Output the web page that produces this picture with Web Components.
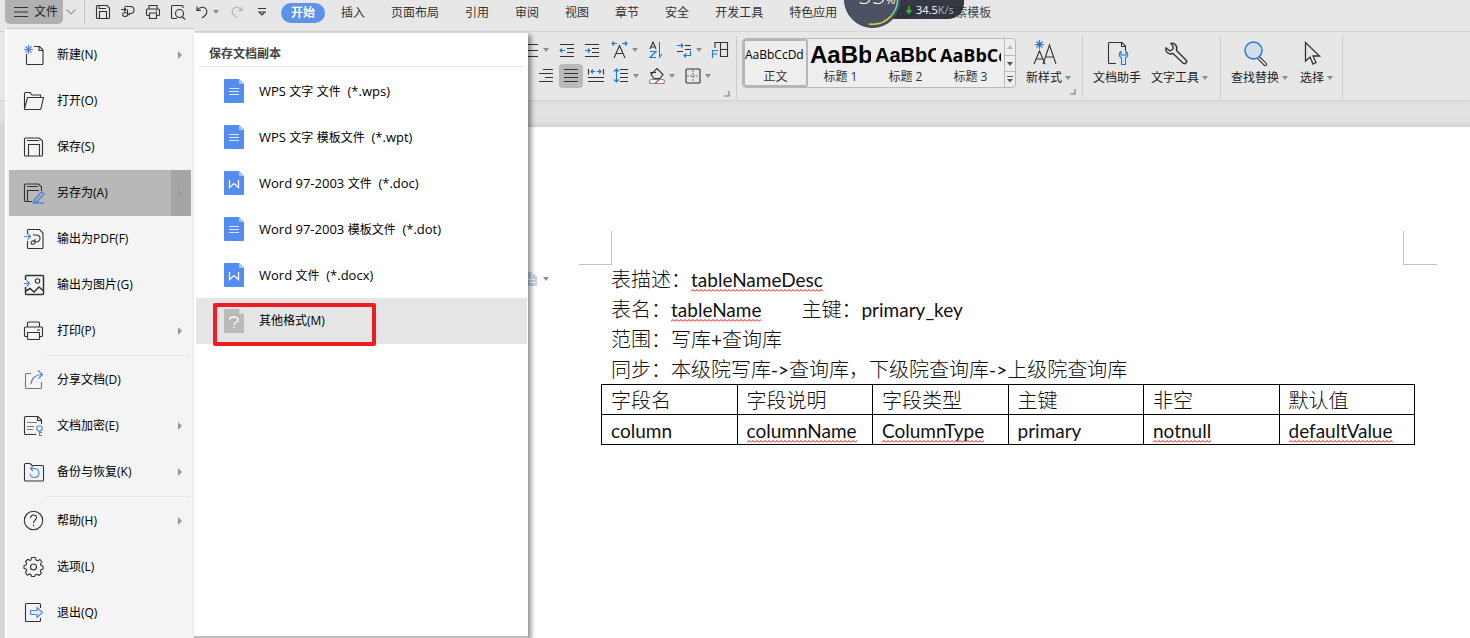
<!DOCTYPE html>
<html lang="zh-CN">
<head>
<meta charset="utf-8">
<title>WPS 文字</title>
<style>
html,body{margin:0;height:100%}
body{font-family:"Open Sans","Noto Sans CJK SC",sans-serif;font-size:12px;line-height:20px;color:#222;overflow:hidden}
</style>
</head>
<body>
<wps-app></wps-app>
<script>
const BASE = '*{box-sizing:border-box}button{font:inherit;color:inherit;background:none;border:0;padding:0;margin:0}';
const define = (tag, css, html) => {
  customElements.define(tag, class extends HTMLElement {
    connectedCallback() {
      if (this.shadowRoot) return;
      const body = typeof html === 'function' ? html(this) : html;
      this.attachShadow({ mode: 'open' }).innerHTML = `<style>${BASE}${css}</style>${body}`;
    }
  });
};

/* name: [width, height, svg body] */
const B = 'stroke="#4f86dc"', R = 'stroke="#1f78d1"';
const DOC = (c, f, g) => `<path fill="${c}" stroke="none" d="M1 0H15L20 5V23a1 1 0 0 1-1 1H1a1 1 0 0 1-1-1V1a1 1 0 0 1 1-1Z"/><path fill="${f}" stroke="none" d="M15 0 20 5H15Z"/>${g}`;
const ICONS = {
  burger: [14, 12, '<path d="M0 1.5H14M0 6H14M0 10.5H14"/>'],
  chevron: [10, 6, '<path stroke="#999" d="M.5.5 5 5 9.5.5"/>'],
  caret: [6, 4, '<path stroke="none" fill="#8c8c8c" d="M0 0H6L3 4Z"/>'],
  up: [6, 4, '<path stroke="none" fill="#bbb" d="M0 4H6L3 0Z"/>'],
  down: [6, 4, '<path stroke="none" fill="#555" d="M0 0H6L3 4Z"/>'],
  more: [8, 7, '<path stroke="#555" d="M1 .5H7"/><path stroke="none" fill="#555" d="M1 3H7L4 6.5Z"/>'],
  arrow: [4, 8, '<path stroke="none" fill="#999" d="M0 0 4 4 0 8Z"/>'],
  qsave: [16, 16, '<path d="M1.5 13.5V2.5a1 1 0 0 1 1-1H12L14.500 4V13.500a1 1 0 0 1-1 1H2.500a1 1 0 0 1-1-1ZM4 1.500V4.500H11M4.500 14V7.500H11.500V14"/>'],
  qpdf: [16, 16, '<path d="M5 2.500H10.500a3.500 3.500 0 0 1 0 7H9M7.500 5.500V11a2.500 2 0 1 1-2.500-2.500C8 8.500 8 11 10 11M1 5.500H6M4 3.500 6 5.500 4 7.500"/>'],
  print: [16, 16, '<path d="M4 5V1.500H12V5M4 11.500H2.500a1 1 0 0 1-1-1V6a1 1 0 0 1 1-1H13.500a1 1 0 0 1 1 1V10.500a1 1 0 0 1-1 1H12M4.500 9H11.500V14.500H4.500ZM10.500 7H12.500"/>'],
  preview: [16, 16, '<path d="M7 14.500H2.500a1 1 0 0 1-1-1V2.500a1 1 0 0 1 1-1H12a1 1 0 0 1 1 1V4M12 12.500 15 15.500"/><circle cx="9.500" cy="9.500" r="4"/>'],
  undo: [14, 14, '<path d="M2 1.500V5.500H6M2 5.500C5 1.500 9 1.500 11 4s1 6-4 9"/>'],
  redo: [14, 14, '<path stroke="#b0b0b0" d="M12 1.500V5.500H8M12 5.500C9 1.500 5 1.500 3 4s-1 6 4 9"/>'],
  tray: [10, 8, '<path d="M1 .500H9M2 4H8L5 7Z"/>'],
  search: [14, 14, '<circle cx="6" cy="6" r="4.500"/><path d="M9.500 9.500 13 13"/>'],
  bullets: [20, 16, '<path d="M7 2.500H17M7 8.500H17M7 14.500H17"/>'],
  outdent: [16, 14, `<path d="M1 1.500H15M8 5.500H15M8 9.500H15M1 13.500H15"/><path ${R} d="M1 7.500H6M3 5.500 1 7.500 3 9.500"/>`],
  indent: [16, 14, `<path d="M1 1.500H15M8 5.500H15M8 9.500H15M1 13.500H15"/><path ${R} d="M1 7.500H6M4 5.500 6 7.500 4 9.500"/>`],
  ascale: [18, 18, `<path d="M3 17 8.500 4.500 14 17M5 12.500H12"/><path ${R} d="M1 2.500H6M3 .500 1 2.500 3 4.500M11 2.500H16M14 .500 16 2.500 14 4.500"/>`],
  sort: [16, 18, `<path d="M2 8 5 1 8 8M3 6H7"/><path ${R} d="M2 10.500H8L2 16.500H8M11.500 1V16L14 13"/>`],
  tabs: [16, 16, `<path d="M9 3.500H15M9 7.500H15M1 9.500H7"/><path ${R} d="M1 3.500H7M5 1.500 7 3.500 5 5.500M14.500 9V13.500H8M10 11.500 8 13.500 10 15.500"/>`],
  frame: [18, 18, `<path d="M4 7V1.500H16.500V15.500H9M9.500 1.500V15M10 8.500H16"/><path ${R} d="M1.500 17V9.500H7M1.500 13H6"/>`],
  aright: [16, 16, '<path d="M5 1.500H15M1 5.500H15M7 9.500H15M1 13.500H15"/>'],
  justify: [16, 16, '<path d="M1 1.500H15M1 5.500H15M1 9.500H15M1 13.500H15"/>'],
  spread: [18, 16, `<path d="M1.500 1V6.500M16.500 1V6.500M1 9.500H17M1 13.500H17"/><path ${R} d="M4 3.500H8M6 1.500 4 3.500 6 5.500M10 3.500H14M12 1.500 14 3.500 12 5.500"/>`],
  line: [16, 16, `<path d="M7 1.500H15M7 5.500H15M7 9.500H15M7 13.500H15"/><path ${R} d="M3.500 1V14M1 3.500 3.500 1 6 3.500M1 11.500 3.500 14 6 11.500"/>`],
  fill: [18, 18, '<path d="M3 7.500 9 1.500 15 7.500 12 11.500H6ZM2 5.500H8"/><rect x="1.500" y="12.500" width="15" height="4" rx="2" fill="#fff" stroke="#888"/><path stroke="#e33" d="M7 16.500 11 12.500"/>'],
  grid: [16, 16, '<rect x="1" y="1" width="14" height="14" rx="1"/><path stroke="#777" stroke-dasharray="2 1" d="M8 2V14M2 8H14"/>'],
  corner: [6, 6, '<path stroke="#777" d="M5 0V5H0"/>'],
  newstyle: [28, 28, `<path d="M4 25 9.500 12 15 25M6 20H13M13 25 19.500 6 26 25M15 18H24"/><path ${R} d="M9.500 1V10M5 5.500H14M6.500 2.500 12.500 8.500M12.500 2.500 6.500 8.500"/>`],
  helper: [28, 28, `<path d="M13 24.500H6.500a1 1 0 0 1-1-1V4.500a1 1 0 0 1 1-1H19L22.500 7V12M18.500 3.500V7.500H22.500"/><path ${R} fill="#dbe8f7" d="M18 12.500c-3 2-2 5 .500 6.500V25.500H22.500V19c2.500-1.500 3.500-4.500.500-6.500V16H18Z"/>`],
  wrench: [28, 28, '<path stroke-width="1.400" d="M10 4.500c3-1 7 2 5.500 7L25 21c2 2-1 5-3 3L12 14.500C8 16 4 13 5 9L9 12 12 10V7Z"/>'],
  find: [28, 28, `<path fill="#fff" d="M18 17.500 25.500 24.500a1.500 1.500 0 0 1-2 2L16 19Z"/><circle cx="12.500" cy="11.500" r="8.500" fill="#d2ddec" ${R} stroke-width="1.400"/>`],
  pointer: [28, 28, '<path stroke-width="1.300" d="M7.500 3.500V22L12 18 15 25 18 23.500 15 17H21.500Z"/>'],
  mnew: [24, 24, `<path d="M4.500 11V20.500a1 1 0 0 0 1 1H20a1 1 0 0 0 1-1V7L17.500 3.500H12M17 3.500V7.500H21"/><path ${B} d="M6.500 2V11M2 6.500H11M3.500 3.500 9.500 9.500M9.500 3.500 3.500 9.500"/>`],
  mopen: [24, 24, '<path d="M2.500 19V4.500a1 1 0 0 1 1-1H8L10 6H18.500V8.500M2.500 19.500 5.500 8.500H21.500L19 19.500a1 1 0 0 1-1 1H3.500a1 1 0 0 1-1-1Z"/>'],
  msave: [24, 24, '<path d="M2.500 20V4a1 1 0 0 1 1-1H17L20.500 6V20a1 1 0 0 1-1 1H3.500a1 1 0 0 1-1-1ZM5 5.500H17M6.500 21V9.500H17.500V21"/>'],
  msaveas: [24, 24, `<path d="M10 20.500H3.500a1 1 0 0 1-1-1V4a1 1 0 0 1 1-1H16.500L19.500 6V10M5 5.500H16M5.500 20V9.500H17"/><path ${B} stroke-width="1.500" d="M12 19.500 19 11.500c1-1 3.500.500 2.500 2L15 20.500 11.500 21.500ZM12 22H22"/>`],
  mpdf: [24, 24, `<path d="M5.500 7V3.500a1 1 0 0 1 1-1H17.500L21 6V20.500a1 1 0 0 1-1 1H6.500a1 1 0 0 1-1-1V14M11 8H14.500a3.500 3.500 0 0 1 0 7H13V12M13 15c-1-2-4.500-1-4 1s4 1.500 4-1Z"/><path ${B} d="M2 9.500H8.500M5.500 6.500 8.500 9.500 5.500 12.500"/>`],
  mimg: [24, 24, `<path stroke-width="1.500" d="M3.500 7V3.500a1 1 0 0 1 1-1H20.500a1 1 0 0 1 1 1V20.500a1 1 0 0 1-1 1H4.500a1 1 0 0 1-1-1V14M4 18 8 15.500 12 19 17 14 21 17.500"/><circle cx="15.500" cy="8" r="2.200"/><path ${B} d="M2 10.500H7.500M4.500 7.500 7.500 10.500 4.500 13.500"/>`],
  mprint: [24, 24, '<path d="M5.500 8V4a1 1 0 0 1 1-1H16.500a1 1 0 0 1 1 1V8M5.500 17.500H3.500a1 1 0 0 1-1-1V9a1 1 0 0 1 1-1H19.500a1 1 0 0 1 1 1V16.500a1 1 0 0 1-1 1H17.500M6.500 13.500H17.500V19.500a1 1 0 0 1-1 1H6.500a1 1 0 0 1-1-1V13.500ZM15 11H18"/>'],
  mshare: [24, 24, `<path stroke="#777" d="M9 5.500H4.500a1 1 0 0 0-1 1V19.500a1 1 0 0 0 1 1H18.500a1 1 0 0 0 1-1V14"/><path ${B} d="M9 16C9.500 10 14 6.500 20 6.500M16 2.500 20.500 6.500 16.500 10.500"/>`],
  mlock: [24, 24, `<path d="M14 20.500H3.500a1 1 0 0 1-1-1V3.500a1 1 0 0 1 1-1H16L19.500 6V10M15.500 2.500V6.500H19.500"/><path stroke="#777" d="M5 8.500H15M5 12.500H12M5 15.500H11"/><circle cx="17.500" cy="14.500" r="2.700" ${B}/><path ${B} d="M17.500 17V22M17.500 18.500H20M17.500 21.500H20"/>`],
  mbackup: [24, 24, `<path d="M2.500 20V4.500a1 1 0 0 1 1-1H8L10 5.500H20.500a1 1 0 0 1 1 1V20a1 1 0 0 1-1 1H3.500a1 1 0 0 1-1-1Z"/><path ${B} d="M8.500 8.500H13a4.500 4.500 0 1 1-5 5M11 6 8.500 8.500 11 11"/>`],
  mhelp: [24, 24, '<circle cx="11.500" cy="11.500" r="9.200"/><path d="M8.500 9c0-4 6-4 6-.500 0 2.500-3 2.500-3 5.500M11.500 15.500V17"/>'],
  mgear: [24, 24, '<path stroke-linejoin="round" d="M9.500 2.500h4l.500 2.500 1.800.800L18 4.500 20 7l-1.500 2 .500 1.500 2 .500v3l-2.200.800-.500 1.300 1 2.200L17 20.500l-2-1.200-1.500.500L12.500 21.500h-3L9 19.700l-1.500-.700-2.200 1.200L3.500 17.500l1.200-2-.700-1.500L2 13.500v-3L4 10l.700-1.500L3.500 6.500 6 4.200l2 1.300L9 5Z"/><circle cx="11.500" cy="12" r="3"/>'],
  mexit: [24, 24, `<path d="M18.500 7V3.500a1 1 0 0 0-1-1H4.500a1 1 0 0 0-1 1V19.500a1 1 0 0 0 1 1H17.500a1 1 0 0 0 1-1V17"/><path ${B} fill="#e3ecfa" d="M8.500 9.500H15V6.500L20.500 11.500 15 16.500V13.500H8.500Z"/>`],
  flines: [20, 24, DOC('#548df0', '#a9c6f8', '<path stroke="#dbe7fc" d="M5 9.500H15M5 12.500H15M5 15.500H15"/>')],
  fword: [20, 24, DOC('#548df0', '#a9c6f8', '<path stroke="#fff" stroke-width="1.300" d="M5.500 9V16.500L10 12.500 14.500 16.500V9"/>')],
  fother: [20, 24, DOC('#bababa', '#dadada', '<path stroke="#fff" stroke-width="1.300" d="M5.500 11c0-4 8.500-4 8.500 0 0 2.500-4 2-4 5M10 17.500V19"/>')],
  note: [10, 14, '<path fill="#c3d2ea" stroke="none" d="M0 0H5L10 5V14H0Z"/><path stroke="#fff" d="M1 7.500H8M2 10.500H9M5 0V6"/>'],
  dl: [6, 8, '<path stroke="#2fc13a" stroke-width="1.500" d="M3 0V7M.500 4 3 7 5.500 4"/>']
};

define('ui-icon', `:host{display:inline-flex;flex:none}svg{display:block;fill:none;stroke:#333;stroke-width:1.100}`,
  el => { const [w, h, s] = ICONS[el.getAttribute('name')]; return `<svg width="${w}" height="${h}" viewBox="0 0 ${w} ${h}" aria-hidden="true">${s}</svg>`; });

/* ---------- top bar ---------- */
define('tab-bar', `
:host{display:flex;align-items:flex-start;height:32px;background:#e7e7e7;border-bottom:1px solid #d6d6d6;padding-left:5px}
.file{display:flex;align-items:center;gap:6px;height:24px;width:58px;padding-left:9px;background:#b0b0b0;border-radius:0 0 5px 5px}
.quick{display:flex;align-items:center;height:24px;width:213px}
.quick>button{display:flex;align-items:center;justify-content:center;width:25px;height:24px}
.quick .file-more{width:16px}
.quick i{width:1px;height:24px;background:#c4c4c4;margin:0 5px}
.quick .split{width:34px;gap:4px}
nav{display:flex;gap:26px;height:25px;align-items:center;padding-left:15px;white-space:nowrap;color:#333}
nav a{color:inherit;text-decoration:none;line-height:20px}
nav a.on{background:#5e91e9;color:#fff;font-weight:700;border-radius:10px;padding:0 10px;margin:0 -10px}
label{display:flex;align-items:center;gap:4px;height:25px;margin-left:28px}
input{border:0;background:none;padding:0;width:120px;font:inherit;color:#444;outline:0}
input::placeholder{color:#444;opacity:1}
`, `
<button class="file"><ui-icon name="burger"></ui-icon><span>文件</span></button>
<div class="quick"><button class="file-more" aria-label="更多"><ui-icon name="chevron"></ui-icon></button><i></i>
<button aria-label="保存"><ui-icon name="qsave"></ui-icon></button><button aria-label="输出为PDF"><ui-icon name="qpdf"></ui-icon></button><button aria-label="打印"><ui-icon name="print"></ui-icon></button><button aria-label="打印预览"><ui-icon name="preview"></ui-icon></button><button class="split" aria-label="撤销"><ui-icon name="undo"></ui-icon><ui-icon name="caret"></ui-icon></button><button aria-label="恢复"><ui-icon name="redo"></ui-icon></button><button aria-label="自定义"><ui-icon name="tray"></ui-icon></button></div>
<nav><a class="on" href="#">开始</a><a href="#">插入</a><a href="#">页面布局</a><a href="#">引用</a><a href="#">审阅</a><a href="#">视图</a><a href="#">章节</a><a href="#">安全</a><a href="#">开发工具</a><a href="#">特色应用</a></nav>
<label><ui-icon name="search"></ui-icon><input type="text" aria-label="搜索" placeholder="查找命令、搜索模板"></label>`);

/* ---------- floating network monitor ---------- */
define('speed-widget', `
:host{display:block;width:120px;height:28px;overflow:hidden}
.bar{position:absolute;left:28px;top:0;width:92px;height:19px;background:rgba(40,43,54,.93);border-radius:0 0 16px 0;color:#fff;display:flex;align-items:center;gap:4px;padding-left:34px;font-size:11px;white-space:nowrap}
.bar small{font-size:11px;color:#b4b6bc}
.ball{position:absolute;left:0;bottom:0;width:57px;height:57px;border-radius:50%;background:#4c5261;border:1px solid #3b3f4b}
.ball svg{position:absolute;left:0;top:0;fill:none}
.num{position:absolute;left:13px;bottom:13px;display:flex;align-items:baseline;color:#fff;font-weight:300;font-size:24px;line-height:28px}
.num small{font-size:12px;font-weight:400}
`, `<div class="bar"><ui-icon name="dl"></ui-icon><span>34.5<small>K/s</small></span></div>
<div class="ball"><svg width="55" height="55"><path stroke="#66d9a0" stroke-width="1.500" d="M52.500 25A25 25 0 0 1 46 44"/><path stroke="#d3dc3f" stroke-width="1.500" d="M46 44A25 25 0 0 1 24 52"/></svg><div class="num">55<small>%</small></div></div>`);

/* ---------- ribbon ---------- */
define('tool-button', `
:host{display:block}
button{display:flex;align-items:center;height:24px;width:24px;border-radius:4px}
.main{display:flex;justify-content:center;flex:none;width:24px}
:host([menu]) button{width:32px}
:host([active]) button{background:#b9b9b9}
`, el => `<button aria-label="${el.getAttribute('label')}"><span class="main"><ui-icon name="${el.getAttribute('icon')}"></ui-icon></span>${el.hasAttribute('menu') ? '<ui-icon name="caret"></ui-icon>' : ''}</button>`);

define('big-button', `
:host{display:block}
button{display:flex;flex-direction:column;align-items:center;gap:1px;color:#222}
.text{display:flex;align-items:center;gap:3px;white-space:nowrap}
:host([menu]) .pic{margin-right:9px}
`, el => `<button><ui-icon class="pic" name="${el.getAttribute('icon')}"></ui-icon><span class="text"><slot></slot>${el.hasAttribute('menu') ? '<ui-icon name="caret"></ui-icon>' : ''}</span></button>`);

define('style-card', `
:host{display:block;width:65px;height:48px}
button{display:block;width:65px;height:48px;border:2px solid transparent;border-radius:3px;text-align:center}
:host([active]) button{border-color:#b5b5b5}
.demo{display:block;height:28px;line-height:28px;overflow:hidden;white-space:nowrap;color:#000;text-align:left}
.name{display:block;line-height:16px;color:#333}
`, `<button><span class="demo"><slot name="demo"></slot></span><span class="name"><slot></slot></span></button>`);

define('style-gallery', `
:host{display:flex;width:274px;height:50px;border:1px solid #b9b9b9;border-radius:4px;background:#eee;overflow:hidden}
.cards{display:flex;width:261px}
.scroll{display:grid;grid-template-rows:repeat(3,16px);width:11px;border-left:1px solid #b9b9b9}
.scroll button{display:flex;align-items:center;justify-content:center}
.scroll button+button{border-top:1px solid #b9b9b9}
.h1{font:700 24px/28px "Liberation Sans",sans-serif}
.h2{font:700 20px/28px "Liberation Sans",sans-serif}
.h3{font:700 18px/28px "Open Sans",sans-serif}
`, `<div class="cards">
<style-card active><span slot="demo">AaBbCcDd</span>正文</style-card>
<style-card><span slot="demo" class="h1">AaBb</span>标题 1</style-card>
<style-card><span slot="demo" class="h2">AaBbC</span>标题 2</style-card>
<style-card><span slot="demo" class="h3">AaBbCc</span>标题 3</style-card></div>
<div class="scroll"><button aria-label="上"><ui-icon name="up"></ui-icon></button><button aria-label="下"><ui-icon name="down"></ui-icon></button><button aria-label="更多"><ui-icon name="more"></ui-icon></button></div>`);

define('ribbon-bar', `
:host{display:flex;height:69px;background:#e7e7e7;border-bottom:1px solid #d2d2d2;padding:4px 0 0 519px}
.para{display:flex;flex-direction:column;gap:2px;padding-top:2px;width:217px;position:relative}
.row{display:flex;gap:4px}.set{display:flex;gap:1px}
.row+.row{padding-left:15px}
.corner{position:absolute;right:6px;bottom:3px}
.group{display:flex;height:62px;border-left:1px solid #cbcbcb;position:relative}
.styles{width:346px;padding:2px 0 0 5px;gap:10px}
.tools{width:138px;padding-left:10px;gap:10px}
.edit{width:123px;padding-left:10px;gap:10px;border-right:1px solid #cbcbcb}
big-button{padding-top:3px}
.styles big-button{padding-top:1px}
`, `
<div class="para">
<div class="row"><tool-button menu icon="bullets" label="编号"></tool-button><div class="set"><tool-button icon="outdent" label="减少缩进"></tool-button><tool-button icon="indent" label="增加缩进"></tool-button></div><tool-button menu icon="ascale" label="字符缩放"></tool-button><tool-button icon="sort" label="排序"></tool-button><tool-button menu icon="tabs" label="制表位"></tool-button><tool-button icon="frame" label="边框线"></tool-button></div>
<div class="row"><div class="set"><tool-button icon="aright" label="右对齐"></tool-button><tool-button active icon="justify" label="两端对齐"></tool-button><tool-button icon="spread" label="分散对齐"></tool-button><tool-button menu icon="line" label="行距"></tool-button></div><tool-button menu icon="fill" label="底纹"></tool-button><tool-button menu icon="grid" label="边框"></tool-button></div>
<ui-icon class="corner" name="corner"></ui-icon></div>
<div class="group styles"><style-gallery></style-gallery><big-button menu icon="newstyle">新样式</big-button><ui-icon class="corner" name="corner"></ui-icon></div>
<div class="group tools"><big-button icon="helper">文档助手</big-button><big-button menu icon="wrench">文字工具</big-button></div>
<div class="group edit"><big-button menu icon="find">查找替换</big-button><big-button menu icon="pointer">选择</big-button></div>`);

/* ---------- document ---------- */
define('doc-page', `
:host{display:block;position:relative;background:#fff;padding:104px 66px 0 605px;font-size:20px;line-height:30px;color:#111;font-family:"Lato","Noto Sans CJK SC",sans-serif;font-weight:300}
.marks{display:flex;justify-content:space-between;margin:0 -33px 0 -32px;height:34px}
.marks i{width:33px;border-bottom:1px solid #c4c4c4}
.marks i:first-child{border-right:1px solid #c4c4c4}
.marks i:last-child{width:34px;border-left:1px solid #c4c4c4}
p{margin:0;height:30px;line-height:28px;white-space:nowrap}
b{font-weight:400;font-size:19px;line-height:20px}
u{text-decoration:none;padding-bottom:1px;background:url("data:image/svg+xml,%3Csvg xmlns='http://www.w3.org/2000/svg' width='4' height='3'%3E%3Cpath d='M0 2.500 2 .500 4 2.500' fill='none' stroke='%23e60000'/%3E%3C/svg%3E") left bottom repeat-x}
.key{margin-left:40px}
table{border-collapse:collapse;table-layout:fixed;width:calc(100% + 21px);margin:-1px -11px 0 -10px}
td,th{border:1px solid #000;padding:0 9px;height:30px;line-height:28px;text-align:left;font-weight:inherit}
.note{position:absolute;left:521px;top:145px;display:flex;align-items:center;gap:6px}
`, `
<div class="marks"><i></i><i></i></div>
<p>表描述：<b><u>tableNameDesc</u></b></p>
<p>表名：<b><u>tableName</u></b><span class="key">主键：</span><b>primary_key</b></p>
<p>范围：写库<b>+</b>查询库</p>
<p>同步：本级院写库<b>-&gt;</b>查询库，下级院查询库<b>-&gt;</b>上级院查询库</p>
<table><thead><tr><th>字段名</th><th>字段说明</th><th>字段类型</th><th>主键</th><th>非空</th><th>默认值</th></tr></thead>
<tbody><tr><td><b>column</b></td><td><b><u>columnName</u></b></td><td><b><u>ColumnType</u></b></td><td><b>primary</b></td><td><b><u>notnull</u></b></td><td><b><u>defaultValue</u></b></td></tr></tbody></table>
<div class="note"><ui-icon name="note"></ui-icon><ui-icon name="caret"></ui-icon></div>`);

/* ---------- file menu ---------- */
define('menu-item', `
:host{display:block}
button{display:flex;align-items:center;width:100%;height:46px;padding-left:13px;color:#000;text-align:left}
.text{flex:1;padding-left:11px;white-space:nowrap}
.more{display:flex;align-items:center;align-self:stretch;width:20px;padding-left:7px}
:host([active]) button{background:#b8b8b8}
:host([active]) .more{background:#a5a5a5}
`, el => `<button role="menuitem"><ui-icon name="${el.getAttribute('icon')}"></ui-icon><span class="text"><slot></slot></span>${el.hasAttribute('menu') ? '<span class="more"><ui-icon name="arrow"></ui-icon></span>' : ''}</button>`);

define('format-item', `
:host{display:block;position:relative}
button{display:flex;align-items:center;gap:15px;width:100%;height:46px;padding-left:28px;color:#000;text-align:left;white-space:pre;font-size:12px}
::slotted(b){font-weight:400;font-size:13px}
:host([active]) button{background:#e5e5e5}
.ring{display:none}
:host([active]) .ring{display:block;position:absolute;left:17px;top:5px;width:163px;height:43px;border:4px solid #ee1c24;border-radius:2px}
`, el => `<button role="menuitem"><ui-icon name="${el.getAttribute('icon')}"></ui-icon><span><slot></slot></span></button><span class="ring"></span>`);

define('file-menu', `
:host{display:flex;align-items:stretch}
.left{width:189px;background:#f4f4f4;border:1px solid #c8c8c8;border-left:2px solid #fff;border-right:0;border-bottom:0;padding:3px 3px 0 2px}
hr{border:0;height:1px;background:#e6e6e6;margin:1px 1px 1px 35px}
.right{width:334px;margin-top:5px;background:#fff;border-bottom:2px solid #bdbdbd;box-shadow:3px 2px 5px rgba(0,0,0,.45);padding:10px 1px 0 2px}
h2{margin:0 4px 1px 3px;padding-left:10px;height:24px;border-bottom:1px solid #e6e6e6;font-size:12px;line-height:22px;color:#444}
`, `
<div class="left" role="menu">
<menu-item icon="mnew" menu>新建(N)</menu-item><menu-item icon="mopen">打开(O)</menu-item><menu-item icon="msave">保存(S)</menu-item><menu-item icon="msaveas" menu active>另存为(A)</menu-item><menu-item icon="mpdf">输出为PDF(F)</menu-item><menu-item icon="mimg">输出为图片(G)</menu-item><menu-item icon="mprint" menu>打印(P)</menu-item><hr>
<menu-item icon="mshare">分享文档(D)</menu-item><menu-item icon="mlock" menu>文档加密(E)</menu-item><menu-item icon="mbackup" menu>备份与恢复(K)</menu-item><hr>
<menu-item icon="mhelp" menu>帮助(H)</menu-item><menu-item icon="mgear">选项(L)</menu-item><menu-item icon="mexit">退出(Q)</menu-item></div>
<div class="right" role="menu"><h2>保存文档副本</h2>
<format-item icon="flines"><b>WPS </b>文字<b> </b>文件<b>  (*.wps)</b></format-item>
<format-item icon="flines"><b>WPS </b>文字<b> </b>模板文件<b>  (*.wpt)</b></format-item>
<format-item icon="fword"><b>Word 97-2003 </b>文件<b>  (*.doc)</b></format-item>
<format-item icon="flines"><b>Word 97-2003 </b>模板文件<b>  (*.dot)</b></format-item>
<format-item icon="fword"><b>Word </b>文件<b>  (*.docx)</b></format-item>
<format-item icon="fother" active>其他格式(M)</format-item></div>`);

define('wps-app', `
:host{display:flex;flex-direction:column;min-height:100vh;position:relative;background:#d8d8d8;overflow:hidden}
.strip{height:26px;background:linear-gradient(#dedede,#e2e2e2 30%,#e0e0e0 80%,#d2d2d2)}
.desk{flex:1;display:flex;padding-left:6px}
doc-page{flex:1}
file-menu{position:absolute;left:5px;top:28px;bottom:0}
speed-widget{position:absolute;left:844px;top:0}
`, `<tab-bar></tab-bar><ribbon-bar></ribbon-bar><div class="strip"></div><div class="desk"><doc-page></doc-page></div><file-menu></file-menu><speed-widget></speed-widget>`);
</script>
</body>
</html>
